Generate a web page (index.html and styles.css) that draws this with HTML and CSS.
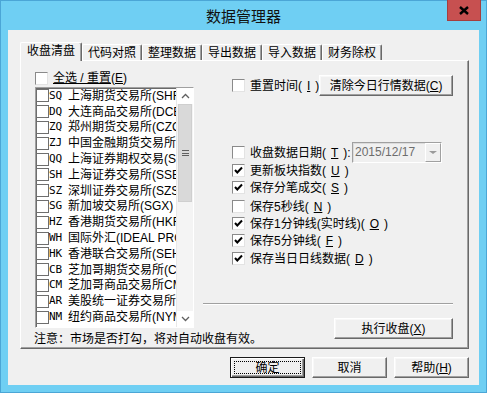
FILE: index.html
```html
<!DOCTYPE html>
<html lang="zh-CN">
<head>
  <meta charset="UTF-8">
  <title>数据管理器</title>
  <link rel="stylesheet" href="styles.css">
</head>
<body>
  <div class="window">
    <div class="titlebar">
      <span class="title">数据管理器</span>
      <span class="close">
        <svg width="10" height="9" viewBox="0 0 10 9"><path d="M1 1 L9 8 M9 1 L1 8" stroke="#000" stroke-width="2.4" fill="none"/></svg>
      </span>
    </div>

    <div class="client">
      <div class="tabs">
        <span class="tab active">收盘清盘</span>
        <span class="tab">代码对照</span>
        <span class="tab">整理数据</span>
        <span class="tab">导出数据</span>
        <span class="tab">导入数据</span>
        <span class="tab">财务除权</span>
      </div>

      <div class="panel">
        <!-- market list -->
        <div class="left">
          <label class="all"><span class="box"></span><span><u>全选 / 重置</u>(<u>E</u>)</span></label>
          <div class="listbox">
            <ul class="items">
              <li><span class="box"></span><span class="code">SQ</span>上海期货交易所(SHFE)</li>
              <li><span class="box"></span><span class="code">DQ</span>大连商品交易所(DCE)</li>
              <li><span class="box"></span><span class="code">ZQ</span>郑州期货交易所(CZCE)</li>
              <li><span class="box"></span><span class="code">ZJ</span>中国金融期货交易所</li>
              <li><span class="box"></span><span class="code">QQ</span>上海证券期权交易(SH)</li>
              <li><span class="box"></span><span class="code">SH</span>上海证券交易所(SSE)</li>
              <li><span class="box"></span><span class="code">SZ</span>深圳证券交易所(SZSE)</li>
              <li><span class="box"></span><span class="code">SG</span>新加坡交易所(SGX)</li>
              <li><span class="box"></span><span class="code">HZ</span>香港期货交易所(HKFE)</li>
              <li><span class="box"></span><span class="code">WH</span>国际外汇(IDEAL PRO)</li>
              <li><span class="box"></span><span class="code">HK</span>香港联合交易所(SEHK)</li>
              <li><span class="box"></span><span class="code">CB</span>芝加哥期货交易所(CBOT)</li>
              <li><span class="box"></span><span class="code">CM</span>芝加哥商品交易所CME</li>
              <li><span class="box"></span><span class="code">AR</span>美股统一证券交易所</li>
              <li><span class="box"></span><span class="code">NM</span>纽约商品交易所(NYMEX)</li>
            </ul>
            <div class="scrollbar">
              <span class="arrow">
                <svg width="9" height="6" viewBox="0 0 9 6"><path d="M1 5 L4.5 1.5 L8 5" stroke="#606060" stroke-width="1.3" fill="none"/></svg>
              </span>
              <span class="thumb"><span class="grip"></span></span>
              <span class="track"></span>
              <span class="arrow">
                <svg width="9" height="6" viewBox="0 0 9 6"><path d="M1 1 L4.5 4.5 L8 1" stroke="#606060" stroke-width="1.3" fill="none"/></svg>
              </span>
            </div>
          </div>
          <p class="note">注意：市场是否打勾，将对自动收盘有效。</p>
        </div>

        <!-- options -->
        <div class="right">
          <div class="row first">
            <label class="check"><span class="box"></span>重置时间(<u>I</u>)</label>
            <button class="btn clear">清除今日行情数据(<u>C</u>)</button>
          </div>
          <div class="row date">
            <label class="check"><span class="box"></span>收盘数据日期(<u>T</u>):</label>
            <span class="combo"><span class="combo-text">2015/12/17</span><span class="combo-btn"></span></span>
          </div>
          <label class="check opt"><span class="box"><svg width="9" height="9" viewBox="0 0 9 9"><path d="M1 4 L3.3 6.5 L8 1.5" stroke="#000" stroke-width="2" fill="none"/></svg></span>更新板块指数(<u>U</u>)</label>
          <label class="check opt"><span class="box"><svg width="9" height="9" viewBox="0 0 9 9"><path d="M1 4 L3.3 6.5 L8 1.5" stroke="#000" stroke-width="2" fill="none"/></svg></span>保存分笔成交(<u>S</u>)</label>
          <label class="check opt spaced"><span class="box"></span>保存5秒线(<u>N</u>)</label>
          <label class="check opt"><span class="box"><svg width="9" height="9" viewBox="0 0 9 9"><path d="M1 4 L3.3 6.5 L8 1.5" stroke="#000" stroke-width="2" fill="none"/></svg></span>保存1分钟线(实时线)(<u>O</u>)</label>
          <label class="check opt"><span class="box"><svg width="9" height="9" viewBox="0 0 9 9"><path d="M1 4 L3.3 6.5 L8 1.5" stroke="#000" stroke-width="2" fill="none"/></svg></span>保存5分钟线(<u>F</u>)</label>
          <label class="check opt nudge"><span class="box"><svg width="9" height="9" viewBox="0 0 9 9"><path d="M1 4 L3.3 6.5 L8 1.5" stroke="#000" stroke-width="2" fill="none"/></svg></span>保存当日日线数据(<u>D</u>)</label>
          <div class="separator"></div>
          <button class="btn run">执行收盘(<u>X</u>)</button>
        </div>
      </div>

      <div class="footer">
        <button class="btn default"><span class="focus">确定</span></button>
        <button class="btn">取消</button>
        <button class="btn">帮助(<u>H</u>)</button>
      </div>
    </div>
  </div>
</body>
</html>
```

FILE: styles.css
```css
* {
  box-sizing: border-box;
}

body {
  margin: 0;
  font-family: "Liberation Sans", "Noto Sans CJK SC", sans-serif;
  font-size: 12px;
  color: #000;
}

u {
  text-decoration: underline;
  text-underline-offset: 1px;
}

.window {
  position: relative;
  width: 487px;
  height: 393px;
  display: flex;
  flex-direction: column;
  background-color: #6fcff3;
  border: 1px solid #4ba6d6;
}

.titlebar {
  height: 29px;
  display: flex;
  align-items: center;
  justify-content: center;
}

.title {
  font-family: "Noto Sans CJK SC", sans-serif;
  font-size: 15px;
  line-height: 29px;
  color: #111;
}

.close {
  position: absolute;
  top: -1px;
  right: 5px;
  width: 34px;
  height: 21px;
  display: flex;
  align-items: center;
  justify-content: center;
  background-color: #c75050;
  border: 1px solid #a53e3e;
  border-top: none;
}

.client {
  height: 355px;
  margin: 0 7px;
  padding: 12px 10px 0 12px;
  display: flex;
  flex-direction: column;
  background-color: #f0f0f0;
}

/* tab strip */
.tabs {
  height: 18px;
  padding-left: 2px;
  display: flex;
  align-items: flex-end;
}

.tab {
  height: 16px;
  width: 60px;
  display: flex;
  align-items: center;
  justify-content: center;
  line-height: 14px;
  border-top: 1px solid #fff;
  border-left: 1px solid #fff;
  border-right: 1px solid #696969;
  box-shadow: inset -1px 0 #a0a0a0;
  border-radius: 2px 2px 0 0;
  background-color: #f0f0f0;
}

.tab.active {
  position: relative;
  z-index: 1;
  height: 19px;
  width: 62px;
  margin-left: -2px;
  margin-bottom: -1px;
  padding-bottom: 2px;
}

.panel {
  height: 289px;
  padding: 11px 15px 0 14px;
  display: grid;
  grid-template-columns: 159px 250px;
  column-gap: 9px;
  align-items: start;
  border: 1px solid;
  border-color: #fff #696969 #696969 #fff;
  box-shadow: inset -1px -1px #a0a0a0;
}

/* left column */
.all {
  height: 13px;
  display: flex;
  align-items: center;
  gap: 5px;
  line-height: 13px;
}

.box {
  width: 13px;
  height: 13px;
  flex: none;
  display: flex;
  align-items: center;
  justify-content: center;
  background-color: #fff;
  border: 1px solid;
  border-color: #8a8a8a #e3e3e3 #e3e3e3 #8a8a8a;
}

.listbox {
  height: 241px;
  margin-top: 2px;
  display: flex;
  background-color: #fff;
  border: 1px solid;
  border-color: #a0a0a0 #fff #fff #a0a0a0;
  box-shadow: inset 1px 1px #696969;
}

.items {
  flex: 1;
  min-width: 0;
  margin: 0;
  padding: 0;
  list-style: none;
  overflow: hidden;
}

.items li {
  height: 15.8px;
  display: flex;
  align-items: center;
  white-space: nowrap;
  line-height: 14px;
}

.items .box {
  border: 1px solid #6e6e6e;
}

.code {
  width: 19px;
  flex: none;
  font-family: "DejaVu Sans Mono", monospace;
  font-size: 11px;
}

.scrollbar {
  width: 17px;
  flex: none;
  display: flex;
  flex-direction: column;
  background-color: #f4f4f4;
  border-left: 1px solid #e8e8e8;
}

.arrow {
  height: 16px;
  display: flex;
  align-items: center;
  justify-content: center;
  background-color: #fff;
}

.thumb {
  height: 98px;
  margin: 0 1px;
  display: flex;
  align-items: center;
  justify-content: center;
  background-color: #d9d9d9;
  border: 1px solid #cfcfcf;
}

.grip {
  width: 7px;
  height: 6px;
  border-top: 1px solid #606060;
  border-bottom: 1px solid #606060;
  background: linear-gradient(#d9d9d9 2px, #606060 2px, #606060 3px, #d9d9d9 3px);
}

.track {
  flex: 1;
}

.note {
  margin: 4px 0 0 -1px;
  line-height: 14px;
  white-space: nowrap;
}

/* right column */
.right {
  display: flex;
  flex-direction: column;
}

.row {
  height: 21px;
  display: flex;
  align-items: center;
}

.row.first {
  margin-top: 3px;
}

.row.date {
  margin-top: 46px;
}

.check {
  height: 17px;
  padding-left: 29px;
  display: flex;
  align-items: center;
  gap: 5px;
  line-height: 14px;
  white-space: nowrap;
}

.opt:first-of-type {
  margin-top: -1px;
}

.spaced {
  margin-top: 2px;
}

.nudge {
  margin-top: 1px;
}

.combo {
  width: 90px;
  height: 21px;
  margin-left: auto;
  margin-right: 11px;
  display: flex;
  background-color: #f0f0f0;
  border: 1px solid;
  border-color: #a0a0a0 #fff #fff #a0a0a0;
  box-shadow: inset 1px 1px #dcdcdc;
}

.combo-text {
  flex: 1;
  padding-left: 2px;
  font-size: 12px;
  line-height: 19px;
  color: #6d6d6d;
}

.combo-btn {
  width: 16px;
  display: flex;
  align-items: center;
  justify-content: center;
  background-color: #f0f0f0;
  border: 1px solid;
  border-color: #fff #a0a0a0 #a0a0a0 #fff;
}

.combo-btn::after {
  content: "";
  border-left: 4px solid transparent;
  border-right: 4px solid transparent;
  border-top: 3px solid #9a9a9a;
}

.separator {
  height: 2px;
  margin-top: 36px;
  border-top: 1px solid #a0a0a0;
  border-bottom: 1px solid #fff;
}

/* buttons */
.btn {
  height: 21px;
  padding: 0;
  font-family: inherit;
  font-size: 12px;
  line-height: 14px;
  color: #000;
  background-color: #f0f0f0;
  border: 1px solid;
  border-color: #fff #696969 #696969 #fff;
  box-shadow: inset -1px -1px #a0a0a0, inset 1px 1px #f8f8f8;
}

.btn.clear {
  width: 137px;
  margin-left: auto;
}

.btn.run {
  width: 119px;
  margin-top: 13px;
  align-self: flex-end;
}

.footer {
  margin-top: 8px;
  display: flex;
  justify-content: flex-end;
  gap: 7px;
}

.footer .btn {
  width: 75px;
}

.btn.default {
  display: flex;
  padding: 3px;
  border: 1px solid #1a1a1a;
  box-shadow: inset 1px 1px #fff, inset -1px -1px #696969, inset -2px -2px #a0a0a0;
}

.focus {
  flex: 1;
  display: flex;
  align-items: center;
  justify-content: center;
  border: 1px dotted #000;
}
```
